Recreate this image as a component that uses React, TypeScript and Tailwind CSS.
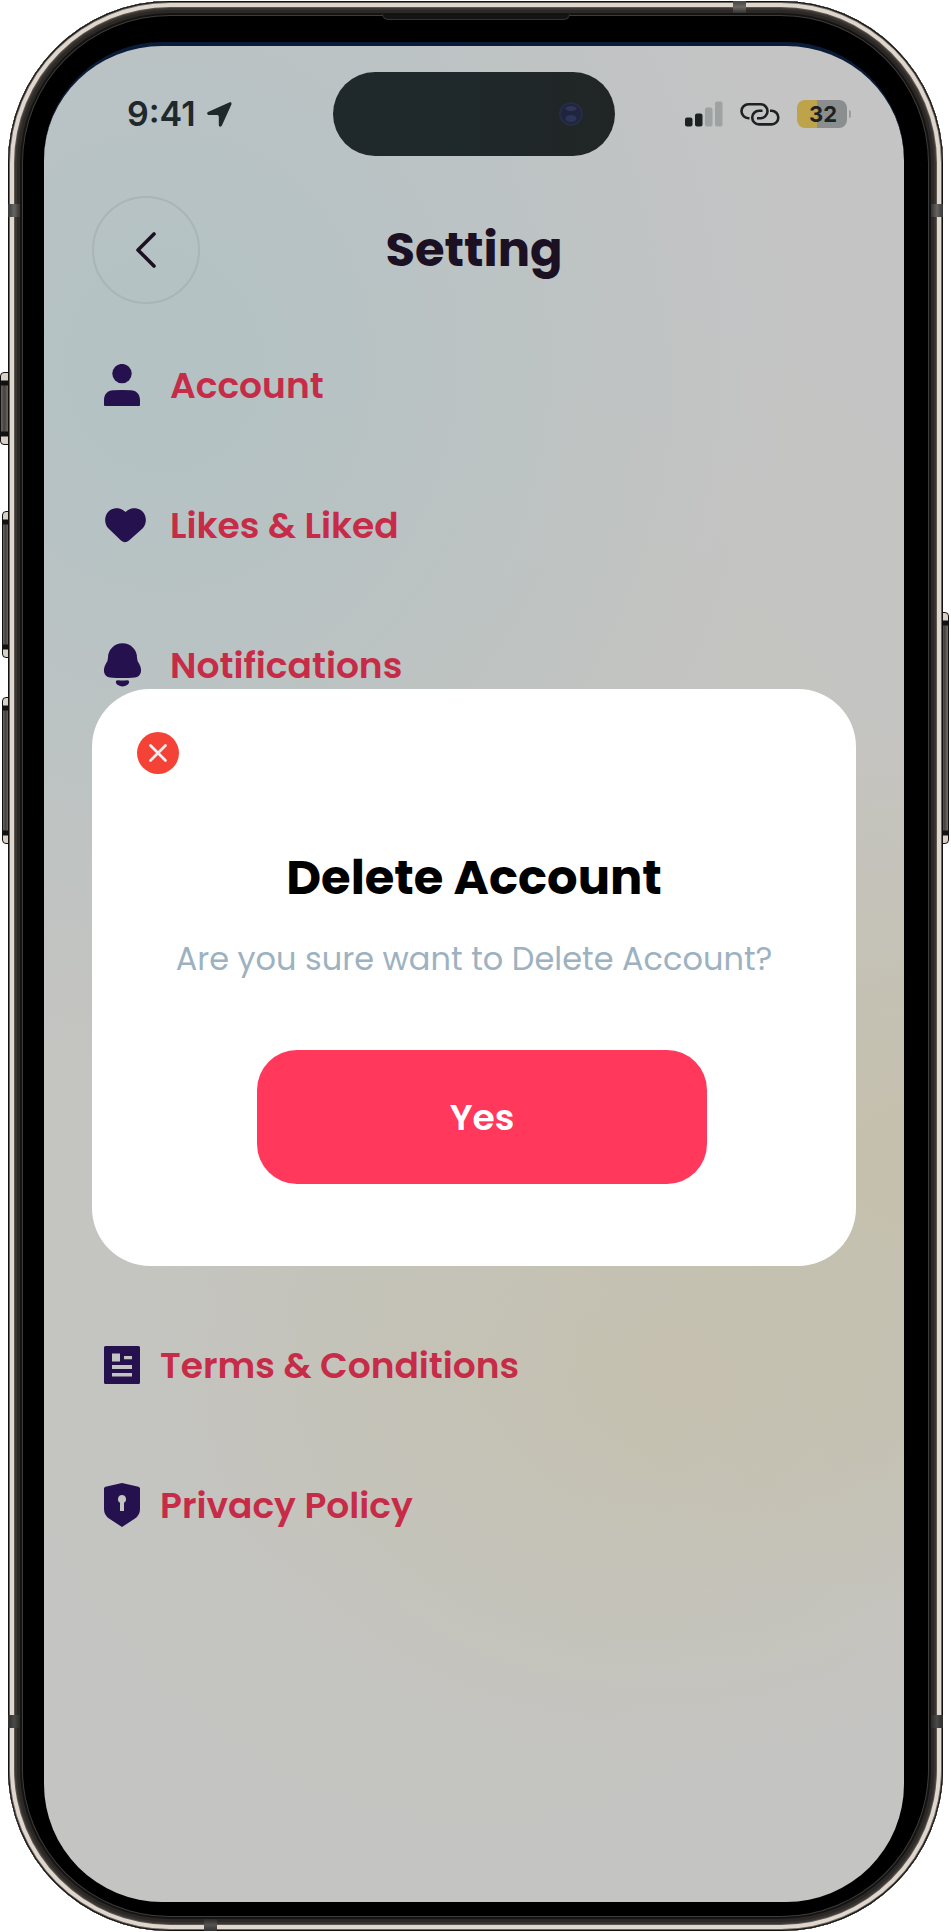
import type { ReactNode } from "react";

function MenuItem({ icon, label, compact }: { icon: ReactNode; label: string; compact?: boolean }) {
  return (
    <li>
      <a
        href="#"
        className={`flex h-11 items-center text-[36px] leading-[44px] font-semibold text-[#c62c48] ${compact ? "gap-5" : "gap-6"}`}
      >
        <span className={compact ? "w-9" : "w-[42px]"}>{icon}</span>
        {label}
      </a>
    </li>
  );
}

const UserIcon = () => (
  <svg width="42" height="44" viewBox="0 0 42 44" fill="#26114f" aria-hidden="true">
    <circle cx="18" cy="9.600" r="9.700" />
    <path d="M0 41V36C0 30 4 26.200 9 26.200Q18 25.800 27 26.200C32 26.200 36 30 36 36V41Q36 42 35 42H1Q0 42 0 41Z" />
  </svg>
);

const HeartIcon = () => (
  <svg width="42" height="44" viewBox="0 0 42 44" fill="#26114f" aria-hidden="true">
    <path d="M21.500 8C26 3 34 3 38.500 7.500C43 12 43 20 38.500 24.500L25 36.500Q21 40 17 36.500L4.500 24.500C0 20 0 12 4.500 7.500C9 3 17 3 21.500 8Z" />
  </svg>
);

const BellIcon = () => (
  <svg width="42" height="44" viewBox="0 0 42 44" fill="#26114f" className="overflow-visible" aria-hidden="true">
    <path d="M4 13.500A14.500 14.200 0 0 1 33 13.500Q33 16.500 35 19.500C39 26.500 37 32.800 31 33.500Q18.500 34.700 6 33.500C0 32.800-2 26.500 2 19.500Q4 16.500 4 13.500Z" />
    <path d="M14 36.200Q18.500 37 23 36.200C26 36 25.500 39.200 23.500 40.700Q18.500 44.200 13.500 40.700C11.500 39.200 11 36 14 36.200Z" />
  </svg>
);

const TermsIcon = () => (
  <svg width="36" height="44" viewBox="0 0 36 44" aria-hidden="true">
    <path
      fill="#26114f"
      fillRule="evenodd"
      d="M1.500 2H34.500Q36 2 36 3.500V38.500Q36 40 34.500 40H1.500Q0 40 0 38.500V3.500Q0 2 1.500 2ZM8 9.500V17.500H16V9.500ZM20 12V15.200H28V12ZM8 21V25H28V21ZM8 29V32.500H28V29Z"
    />
  </svg>
);

const ShieldIcon = () => (
  <svg width="36" height="44" viewBox="0 0 36 44" className="overflow-visible" aria-hidden="true">
    <path
      fill="#26114f"
      fillRule="evenodd"
      d="M18-1L34.500 2.700Q36 3.200 36 4.500V25Q36 31 31 34.500L18 43L5 34.500Q0 31 0 25V4.500Q0 3.200 1.500 2.700ZM18 11A4.200 4.200 0 0 0 16 18.800V27H20V18.800A4.200 4.200 0 0 0 18 11Z"
    />
  </svg>
);

function StatusBar() {
  return (
    <div className="grid grid-cols-[1fr_282px_1fr] items-center pt-[26px] font-['Inter',sans-serif] text-[#1f282a]">
      <div className="flex items-center gap-[11px] pl-[83px]">
        <span className="text-[34px] leading-10 font-semibold">9:41</span>
        <svg width="25" height="25" viewBox="0 0 25 25" fill="currentColor" aria-hidden="true">
          <path d="M22.200.5C24 0 25 1 24.300 2.800L15 23.300C14 25.500 11.800 25 11.800 22.800V14.500Q11.800 13 10.300 13H2.200C0 13-.7 10.800 1.500 9.800Z" />
        </svg>
      </div>
      <div className="flex h-[84px] items-center justify-end rounded-full bg-[linear-gradient(90deg,#1f282a_50%,#212525)] pr-8">
        <svg width="24" height="24" viewBox="0 0 24 24" aria-hidden="true">
          <circle cx="12" cy="12" r="12" fill="#262d42" />
          <circle cx="12" cy="12" r="10" fill="#20253f" />
          <ellipse cx="12" cy="6.500" rx="5.500" ry="2.500" fill="#2f3656" />
          <ellipse cx="12" cy="16.500" rx="5.500" ry="3.500" fill="#2d3454" />
        </svg>
      </div>
      <div className="flex items-center justify-end gap-[17px] pr-[53px]">
        <svg width="38" height="26" viewBox="0 0 38 26" aria-label="Signal">
          <rect x="0" y="16.500" width="7.500" height="9" rx="2" fill="#1c2122" />
          <rect x="10" y="12.500" width="7.500" height="13" rx="2" fill="#1c2122" />
          <rect x="20" y="6.500" width="7.500" height="19" rx="2" fill="#9ea2a3" />
          <rect x="30" y=".5" width="7.500" height="25" rx="2" fill="#9ea2a3" />
        </svg>
        <svg width="40" height="24" viewBox="0 0 40 24" fill="none" stroke="#1c2122" strokeWidth="2.600" aria-label="Linked">
          <path d="M9.500 16.200H8.500A7 7 0 0 1 8.500 2.200H20.500A7 7 0 0 1 20.500 16.200H17" />
          <path d="M22.500 8.800H19A6.800 6.800 0 0 0 19 22.400H31.500A6.800 6.800 0 0 0 31.500 8.800H30" />
        </svg>
        <div className="flex items-center gap-0.5">
          <div className="flex h-7 w-[50px] items-center justify-center rounded-lg bg-[linear-gradient(90deg,#bda44b_40%,#8b8e8f_40%)] pl-0.5 text-[22px] leading-7 font-bold text-[#1c2122]">
            32
          </div>
          <div className="h-2 w-0.5 rounded-r-full bg-[#9a9d9e]" />
        </div>
      </div>
    </div>
  );
}

function DeleteDialog() {
  return (
    <section
      role="dialog"
      aria-labelledby="delete-title"
      className="mx-12 mt-px flex flex-col rounded-[58px] bg-white px-[45px] pt-[43px] pb-[82px] text-center"
    >
      <button type="button" aria-label="Close" className="size-[42px] self-start rounded-full bg-[#f44336]">
        <svg width="42" height="42" viewBox="0 0 42 42" stroke="#eceff1" strokeWidth="2.800" strokeLinecap="round" aria-hidden="true">
          <path d="M13.500 13.500L28.500 28.500M28.500 13.500L13.500 28.500" />
        </svg>
      </button>
      <h2 id="delete-title" className="mt-[74px] text-[48px] leading-[60px] font-bold text-black">
        Delete Account
      </h2>
      <p className="mt-[31px] text-[32px] leading-10 font-normal whitespace-nowrap text-[#9db2c0]">
        Are you sure want to Delete Account?
      </p>
      <button
        type="button"
        className="mt-[71px] ml-4 h-[134px] w-2/3 self-center rounded-[40px] bg-[#ff385c] pt-0.5 text-[36px] leading-[44px] font-semibold text-white"
      >
        Yes
      </button>
    </section>
  );
}

const SideKey = ({ className }: { className: string }) => (
  <div
    className={`absolute border border-[#111] bg-[linear-gradient(180deg,#d9d0c6_7px,#111_8px,#111_12px,transparent_13px,transparent_calc(100%-13px),#111_calc(100%-12px),#111_calc(100%-8px),#d9d0c6_calc(100%-7px)),linear-gradient(90deg,#6c655e,#45413e_40%,#777069)] ${className}`}
  />
);

const Band = ({ className }: { className: string }) => <div className={`absolute ${className}`} />;

export default function App() {
  return (
    <main className="relative bg-white px-2 py-px font-['Poppins','Inter',sans-serif]">
      <SideKey className="top-[372px] left-0 h-[73px] w-2.5 rounded-l-sm" />
      <SideKey className="top-[511px] left-0.5 h-[147px] w-2 rounded-l-sm" />
      <SideKey className="top-[697px] left-0.5 h-[147px] w-2 rounded-l-sm" />
      <SideKey className="top-[612px] right-0.5 h-[232px] w-2 rounded-r-sm" />

      <div className="relative rounded-[162px] bg-black pt-[41px] pr-[39px] pb-[29px] pl-9 shadow-[inset_0_0_0_1px_#111,inset_0_0_0_2px_#6b655f,inset_0_0_0_6px_#dfd6cd,inset_0_0_0_7px_#5d5752,inset_0_0_0_9px_#393532,inset_0_0_0_12px_#2b2826,inset_0_0_0_14px_#151413,inset_0_0_0_15px_#3b3b3b]">
        <Band className="top-[203px] left-0 h-[13px] w-3 bg-linear-to-r from-[#383838] via-[#666563] to-[#333]" />
        <Band className="top-[203px] right-0 h-[13px] w-3 bg-linear-to-l from-[#383838] via-[#666563] to-[#333]" />
        <Band className="bottom-[203px] left-0 h-[13px] w-3 bg-linear-to-r from-[#2c2c2c] via-[#4a4a49] to-[#2c2c2c]" />
        <Band className="right-0 bottom-[203px] h-[13px] w-3 bg-linear-to-l from-[#2c2c2c] via-[#4a4a49] to-[#2c2c2c]" />
        <Band className="top-0 right-[197px] h-3 w-[13px] bg-linear-to-b from-[#444] via-[#6a6966] to-[#333]" />
        <Band className="bottom-0 left-[196px] h-3 w-[13px] bg-linear-to-t from-[#333] via-[#555452] to-[#2c2c2c]" />
        <div className="absolute top-[13px] left-1/2 h-1.5 w-[188px] -translate-x-1/2 rounded-b-md border border-t-0 border-[#333] bg-[#141414]" />

        <div className="overflow-hidden rounded-[118px] border-t-4 border-[#0a1c3a] bg-[#c4c4c4] bg-[radial-gradient(ellipse_620px_700px_at_14%_17%,#b5c2c4_15%,transparent),radial-gradient(ellipse_380px_440px_at_100%_60%,#c5c0ad_5%,transparent),radial-gradient(ellipse_480px_380px_at_72%_72%,#c5c1b0,transparent),radial-gradient(ellipse_700px_900px_at_50%_60%,#c4c4bc,transparent)] pb-[374px]">
          <StatusBar />

          <header className="mt-10 grid grid-cols-[108px_1fr_108px] items-center px-12">
            <button
              type="button"
              aria-label="Back"
              className="flex size-[108px] items-center justify-center rounded-full border-2 border-[#a9b5b6]"
            >
              <svg width="24" height="40" viewBox="0 0 24 40" fill="none" stroke="#1c1023" strokeWidth="3.600" strokeLinecap="round" strokeLinejoin="round" aria-hidden="true">
                <path d="M20 4L4 20L20 36" />
              </svg>
            </button>
            <h1 className="text-center text-[48px] leading-[60px] font-bold text-[#1c1023]">Setting</h1>
          </header>

          <ul className="mt-[60px] flex flex-col gap-24 pl-[60px]">
            <MenuItem icon={<UserIcon />} label="Account" />
            <MenuItem icon={<HeartIcon />} label="Likes & Liked" />
            <MenuItem icon={<BellIcon />} label="Notifications" />
          </ul>

          <DeleteDialog />

          <ul className="mt-[78px] flex flex-col gap-24 pl-[60px]">
            <MenuItem compact icon={<TermsIcon />} label="Terms & Conditions" />
            <MenuItem compact icon={<ShieldIcon />} label="Privacy Policy" />
          </ul>
        </div>
      </div>
    </main>
  );
}
